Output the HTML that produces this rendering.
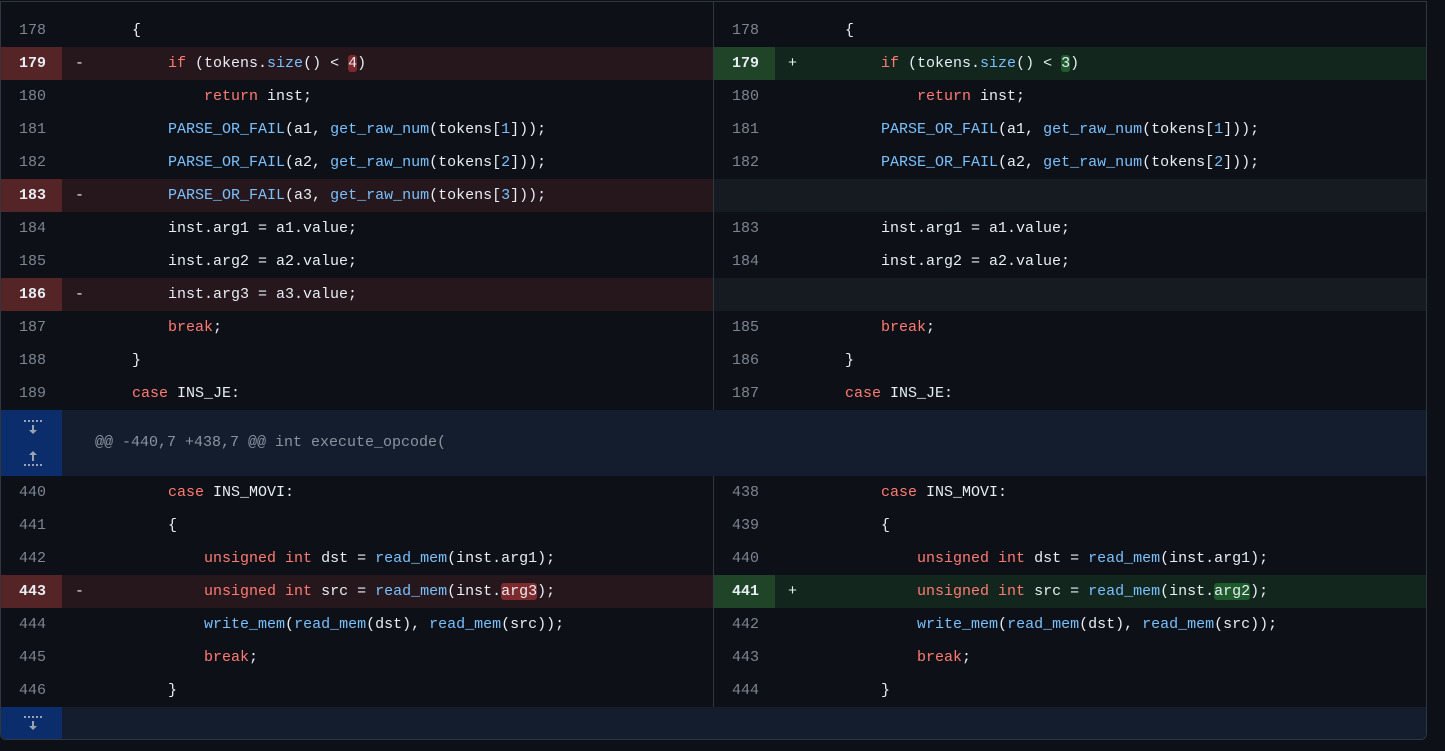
<!DOCTYPE html>
<html><head><meta charset="utf-8"><style>
body{margin:0;background:#0d1117;width:1445px;height:751px;overflow:hidden;font-family:"Liberation Mono",monospace;font-size:15px;color:#e6edf3}
.box{position:absolute;left:0;top:1px;width:1425px;height:737px;border:1px solid #30363d;border-radius:0 0 6px 6px;overflow:hidden;background:#0d1117}
.L,.R{position:absolute;height:33px;line-height:33px;white-space:pre}
.L{left:0;width:712px}.R{left:713px;width:712px}
.n{position:absolute;left:0;top:0;width:61px;height:33px;text-align:right;padding-right:16px;box-sizing:border-box;color:#7d8590}
.m{position:absolute;left:74px}
.c{position:absolute;left:95px}
.del{background:#25171c}.del .n{background:#542426;color:#e6edf3;font-weight:bold}
.add{background:#12261e}.add .n{background:#1f4428;color:#e6edf3;font-weight:bold}
.emp{background:#161b22}
.k{color:#ff7b72}.f{color:#79c0ff}
.wd{background:#7d2a2d;border-radius:3px}.wa{background:#1f5a2c;border-radius:3px}
.div{position:absolute;left:712px;top:0;width:1px;height:408px;background:#30363d}
.div2{position:absolute;left:712px;top:474px;width:1px;height:231px;background:#30363d}
.hunk{position:absolute;left:0;width:1425px;background:#131d2e}
.hn{position:absolute;left:0;top:0;width:61px;height:100%;background:#0c2d6b}
</style></head><body>
<div class="box">
<div class="L" style="top:12px"><span class="n">178</span><span class="c">    {</span></div>
<div class="R" style="top:12px"><span class="n">178</span><span class="c">    {</span></div>
<div class="L del" style="top:45px"><span class="n">179</span><span class="m">-</span><span class="c">        <span class="k">if</span> (tokens.<span class="f">size</span>() &lt; <span class="wd">4</span>)</span></div>
<div class="R add" style="top:45px"><span class="n">179</span><span class="m">+</span><span class="c">        <span class="k">if</span> (tokens.<span class="f">size</span>() &lt; <span class="wa">3</span>)</span></div>
<div class="L" style="top:78px"><span class="n">180</span><span class="c">            <span class="k">return</span> inst;</span></div>
<div class="R" style="top:78px"><span class="n">180</span><span class="c">            <span class="k">return</span> inst;</span></div>
<div class="L" style="top:111px"><span class="n">181</span><span class="c">        <span class="f">PARSE_OR_FAIL</span>(a1, <span class="f">get_raw_num</span>(tokens[<span class="f">1</span>]));</span></div>
<div class="R" style="top:111px"><span class="n">181</span><span class="c">        <span class="f">PARSE_OR_FAIL</span>(a1, <span class="f">get_raw_num</span>(tokens[<span class="f">1</span>]));</span></div>
<div class="L" style="top:144px"><span class="n">182</span><span class="c">        <span class="f">PARSE_OR_FAIL</span>(a2, <span class="f">get_raw_num</span>(tokens[<span class="f">2</span>]));</span></div>
<div class="R" style="top:144px"><span class="n">182</span><span class="c">        <span class="f">PARSE_OR_FAIL</span>(a2, <span class="f">get_raw_num</span>(tokens[<span class="f">2</span>]));</span></div>
<div class="L del" style="top:177px"><span class="n">183</span><span class="m">-</span><span class="c">        <span class="f">PARSE_OR_FAIL</span>(a3, <span class="f">get_raw_num</span>(tokens[<span class="f">3</span>]));</span></div>
<div class="R emp" style="top:177px"></div>
<div class="L" style="top:210px"><span class="n">184</span><span class="c">        inst.arg1 = a1.value;</span></div>
<div class="R" style="top:210px"><span class="n">183</span><span class="c">        inst.arg1 = a1.value;</span></div>
<div class="L" style="top:243px"><span class="n">185</span><span class="c">        inst.arg2 = a2.value;</span></div>
<div class="R" style="top:243px"><span class="n">184</span><span class="c">        inst.arg2 = a2.value;</span></div>
<div class="L del" style="top:276px"><span class="n">186</span><span class="m">-</span><span class="c">        inst.arg3 = a3.value;</span></div>
<div class="R emp" style="top:276px"></div>
<div class="L" style="top:309px"><span class="n">187</span><span class="c">        <span class="k">break</span>;</span></div>
<div class="R" style="top:309px"><span class="n">185</span><span class="c">        <span class="k">break</span>;</span></div>
<div class="L" style="top:342px"><span class="n">188</span><span class="c">    }</span></div>
<div class="R" style="top:342px"><span class="n">186</span><span class="c">    }</span></div>
<div class="L" style="top:375px"><span class="n">189</span><span class="c">    <span class="k">case</span> INS_JE:</span></div>
<div class="R" style="top:375px"><span class="n">187</span><span class="c">    <span class="k">case</span> INS_JE:</span></div>
<div class="div"></div>
<div class="hunk" style="top:408px;height:66px"><div class="hn">
<svg width="61" height="66" viewBox="0 0 61 66"><g fill="#9aa4b0"><rect x="23" y="10" width="2" height="2"/><rect x="27" y="10" width="2" height="2"/><rect x="31" y="10" width="2" height="2"/><rect x="35" y="10" width="2" height="2"/><rect x="39" y="10" width="2" height="2"/><rect x="31" y="15" width="2" height="6"/><path d="M28 20h8l-4 4z"/>
<path d="M28 45h8l-4-4z"/><rect x="31" y="45" width="2" height="6"/><rect x="23" y="54" width="2" height="2"/><rect x="27" y="54" width="2" height="2"/><rect x="31" y="54" width="2" height="2"/><rect x="35" y="54" width="2" height="2"/><rect x="39" y="54" width="2" height="2"/></g></svg></div>
<span style="position:absolute;left:94px;top:0;line-height:66px;color:#8b949e;white-space:pre">@@ -440,7 +438,7 @@ int execute_opcode(</span></div>
<div class="L" style="top:474px"><span class="n">440</span><span class="c">        <span class="k">case</span> INS_MOVI:</span></div>
<div class="R" style="top:474px"><span class="n">438</span><span class="c">        <span class="k">case</span> INS_MOVI:</span></div>
<div class="L" style="top:507px"><span class="n">441</span><span class="c">        {</span></div>
<div class="R" style="top:507px"><span class="n">439</span><span class="c">        {</span></div>
<div class="L" style="top:540px"><span class="n">442</span><span class="c">            <span class="k">unsigned int</span> dst = <span class="f">read_mem</span>(inst.arg1);</span></div>
<div class="R" style="top:540px"><span class="n">440</span><span class="c">            <span class="k">unsigned int</span> dst = <span class="f">read_mem</span>(inst.arg1);</span></div>
<div class="L del" style="top:573px"><span class="n">443</span><span class="m">-</span><span class="c">            <span class="k">unsigned int</span> src = <span class="f">read_mem</span>(inst.<span class="wd">arg3</span>);</span></div>
<div class="R add" style="top:573px"><span class="n">441</span><span class="m">+</span><span class="c">            <span class="k">unsigned int</span> src = <span class="f">read_mem</span>(inst.<span class="wa">arg2</span>);</span></div>
<div class="L" style="top:606px"><span class="n">444</span><span class="c">            <span class="f">write_mem</span>(<span class="f">read_mem</span>(dst), <span class="f">read_mem</span>(src));</span></div>
<div class="R" style="top:606px"><span class="n">442</span><span class="c">            <span class="f">write_mem</span>(<span class="f">read_mem</span>(dst), <span class="f">read_mem</span>(src));</span></div>
<div class="L" style="top:639px"><span class="n">445</span><span class="c">            <span class="k">break</span>;</span></div>
<div class="R" style="top:639px"><span class="n">443</span><span class="c">            <span class="k">break</span>;</span></div>
<div class="L" style="top:672px"><span class="n">446</span><span class="c">        }</span></div>
<div class="R" style="top:672px"><span class="n">444</span><span class="c">        }</span></div>
<div class="div2"></div>
<div class="hunk" style="top:705px;height:33px"><div class="hn">
<svg width="61" height="33" viewBox="0 0 61 33"><g fill="#9aa4b0"><rect x="23" y="9" width="2" height="2"/><rect x="27" y="9" width="2" height="2"/><rect x="31" y="9" width="2" height="2"/><rect x="35" y="9" width="2" height="2"/><rect x="39" y="9" width="2" height="2"/><rect x="31" y="14" width="2" height="6"/><path d="M28 19h8l-4 4z"/></g></svg></div></div>
</div>
</body></html>
